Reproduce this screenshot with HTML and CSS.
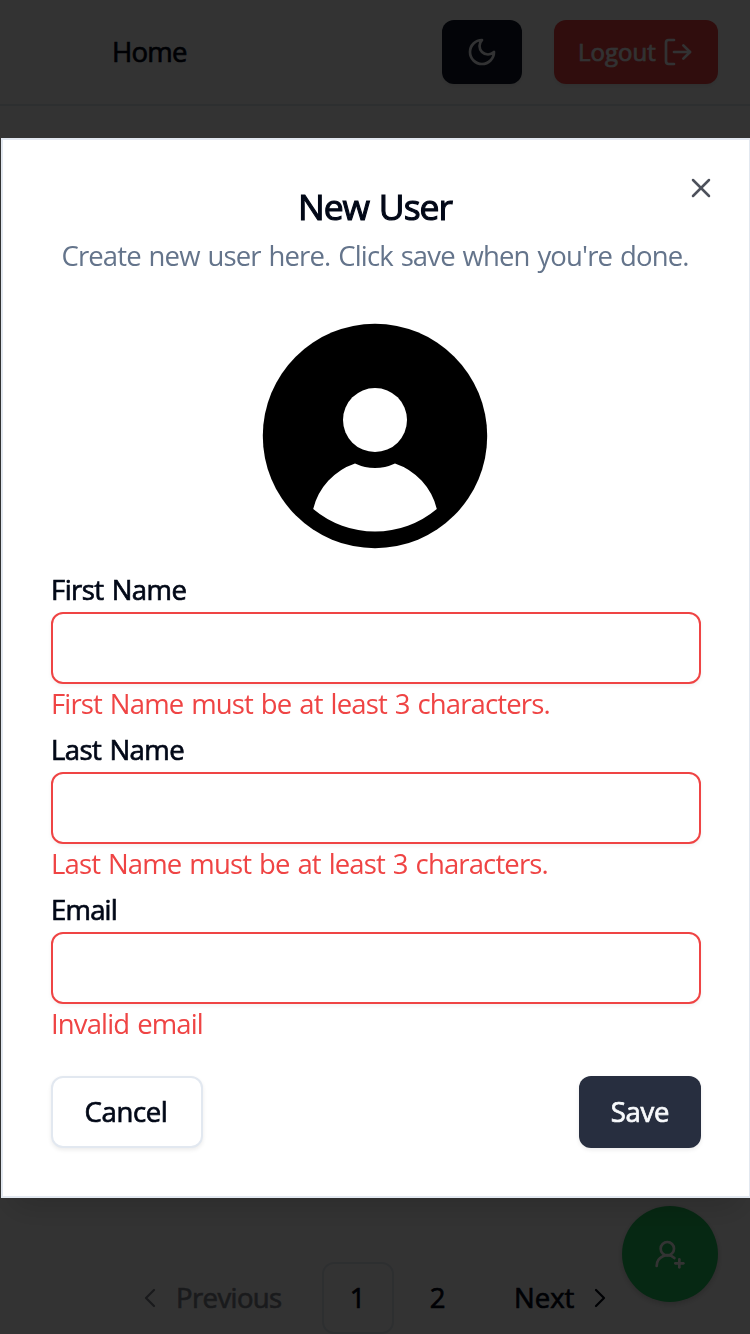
FILE: index.html
```html
<!DOCTYPE html>
<html lang="en">
<head>
<meta charset="utf-8">
<title>Users</title>
<link rel="stylesheet" href="styles.css">
</head>
<body>
<div class="page">
  <header class="header">
    <a class="home">Home</a>
    <div class="header-actions">
      <button class="btn theme-btn" aria-label="Toggle theme">
        <svg class="icon" viewBox="0 0 24 24"><path d="M12 3a6 6 0 0 0 9 9 9 9 0 1 1-9-9Z"/></svg>
      </button>
      <button class="btn logout-btn"><span>Logout</span>
        <svg class="icon" viewBox="0 0 24 24"><path d="M9 21H5a2 2 0 0 1-2-2V5a2 2 0 0 1 2-2h4"/><path d="m16 17 5-5-5-5"/><path d="M21 12H9"/></svg>
      </button>
    </div>
  </header>
  <nav class="pagination">
    <a class="page-link prev"><svg class="icon thin" viewBox="0 0 24 24"><path d="m15 18-6-6 6-6"/></svg><span>Previous</span></a>
    <a class="page-link num current">1</a>
    <a class="page-link num">2</a>
    <a class="page-link next"><span>Next</span><svg class="icon thin" viewBox="0 0 24 24"><path d="m9 18 6-6-6-6"/></svg></a>
  </nav>
  <button class="fab" aria-label="Add user">
    <svg class="icon" viewBox="0 0 24 24"><path d="M2 21a8 8 0 0 1 13.292-6"/><circle cx="10" cy="8" r="5"/><path d="M19 16v6"/><path d="M22 19h-6"/></svg>
  </button>
</div>
<div class="overlay"></div>
<section class="dialog" role="dialog">
  <button class="close" aria-label="Close"><svg class="icon" viewBox="0 0 24 24"><path d="M18 6 6 18"/><path d="m6 6 12 12"/></svg></button>
  <h2 class="title">New User</h2>
  <p class="subtitle">Create new user here. Click save when you're done.</p>
  <svg class="avatar" viewBox="0 0 226 226">
    <circle cx="113" cy="113" r="112.2"/>
    <circle class="cut" cx="113" cy="97" r="32"/>
    <path class="cut" d="M93 140.5A48 48 0 0 0 133 140.5A64 64 0 0 1 174.8 186A96 96 0 0 1 51.2 186A64 64 0 0 1 93 140.5Z"/>
  </svg>
  <form class="form">
    <div class="field"><label class="label">First Name</label><input class="input"><p class="error">First Name must be at least 3 characters.</p></div>
    <div class="field"><label class="label">Last Name</label><input class="input"><p class="error">Last Name must be at least 3 characters.</p></div>
    <div class="field"><label class="label label-email">Email</label><input class="input"><p class="error">Invalid email</p></div>
    <div class="actions">
      <button type="button" class="btn cancel">Cancel</button>
      <button type="button" class="btn save">Save</button>
    </div>
  </form>
</section>
</body>
</html>
```
FILE: styles.css
```css
* { box-sizing: border-box; }
body { margin: 0; height: 1334px; overflow: hidden; background: #fff; color: #020817; font-family: "Open Sans", "Noto Sans", sans-serif; font-size: 27.5px; line-height: 40px; }
button { font: inherit; letter-spacing: inherit; border: 0; padding: 0; margin: 0; }
h2, p { margin: 0; }
.icon { width: 32px; height: 32px; fill: none; stroke: currentColor; stroke-width: 2; stroke-linecap: round; stroke-linejoin: round; flex: none; }
.thin { stroke-width: 1.7; }
.page { position: relative; height: 1334px; display: flex; flex-direction: column; justify-content: space-between; overflow: hidden; }
.header { height: 106px; border-bottom: 2px solid #e2e8f0; padding: 0 32px 0 112px; display: flex; align-items: center; justify-content: space-between; }
.home, .btn, .page-link, .title, .label { -webkit-text-stroke: .7px currentColor; }
.home { letter-spacing: -.75px; }
.header-actions { display: flex; gap: 32px; }
.btn { display: flex; align-items: center; justify-content: center; border-radius: 12px; box-shadow: 0 2px 4px rgba(0, 0, 0, .08); }
.theme-btn { width: 80px; height: 64px; background: #0f172a; color: #f8fafc; }
.logout-btn { width: 164px; height: 64px; padding: 0 24px; justify-content: space-between; background: #ef4444; color: #f8fafc; font-size: 24px; }
.pagination { display: flex; height: 72px; padding-left: 134px; align-items: center; }
.page-link { display: flex; align-items: center; height: 72px; }
.prev { width: 188px; gap: 10px; opacity: .5; letter-spacing: -.6px; }
.num { width: 72px; padding-right: 1px; justify-content: center; border: 2px solid transparent; border-radius: 12px; }
.num + .num { margin-left: 8px; }
.current { border-color: #e2e8f0; }
.next { margin-left: 40px; gap: 10px; }
.fab { position: absolute; left: 622px; top: 1206px; width: 96px; height: 96px; border-radius: 50%; background: #22c55e; color: #fff; display: flex; align-items: center; justify-content: center; box-shadow: 0 2px 6px rgba(0, 0, 0, .2); }
.overlay { position: fixed; inset: 0; background: rgba(0, 0, 0, .8); }
.dialog { position: fixed; left: 1px; top: 138px; width: 750px; height: 1060px; padding: 48px 48px 0; background: #fff; border: 2px solid #e2e8f0; box-shadow: 0 20px 30px -10px rgba(0, 0, 0, .15); }
.close { position: absolute; right: 32px; top: 32px; width: 32px; height: 32px; background: none; color: #020817; opacity: .7; }
.close .icon { display: block; stroke-width: 1.9; }
.title { font-size: 35.5px; line-height: 36px; font-weight: 400; text-align: center; letter-spacing: -1px; word-spacing: 1.5px; padding-right: 2px; -webkit-text-stroke-width: 1.1px; }
.subtitle { margin-top: 12px; padding-right: 2px; color: #64748b; text-align: center; white-space: nowrap; letter-spacing: -.87px; word-spacing: 1.6px; }
.avatar { display: block; width: 226px; height: 226px; margin: 47px 0 0 211px; }
.cut { fill: #fff; }
.form { margin-top: 21px; }
.field { height: 160px; }
.label { display: block; height: 42px; line-height: 40px; letter-spacing: -.55px; word-spacing: 1.5px; }
.label-email { letter-spacing: -.8px; }
.input { display: block; width: 650px; height: 72px; border: 2px solid #ef4444; border-radius: 12px; background: #fff; box-shadow: 0 2px 4px rgba(0, 0, 0, .05); outline: 0; }
.error { color: #ef4444; white-space: nowrap; letter-spacing: -.86px; word-spacing: 1.6px; }
.actions { display: flex; justify-content: space-between; width: 650px; margin-top: 26px; }
.cancel { width: 152px; height: 72px; padding-right: 2px; background: #fff; border: 2px solid #e2e8f0; color: #020817; letter-spacing: -.35px; }
.save { width: 122px; height: 72px; background: #272e3f; color: #f8fafc; letter-spacing: -.3px; }
```
